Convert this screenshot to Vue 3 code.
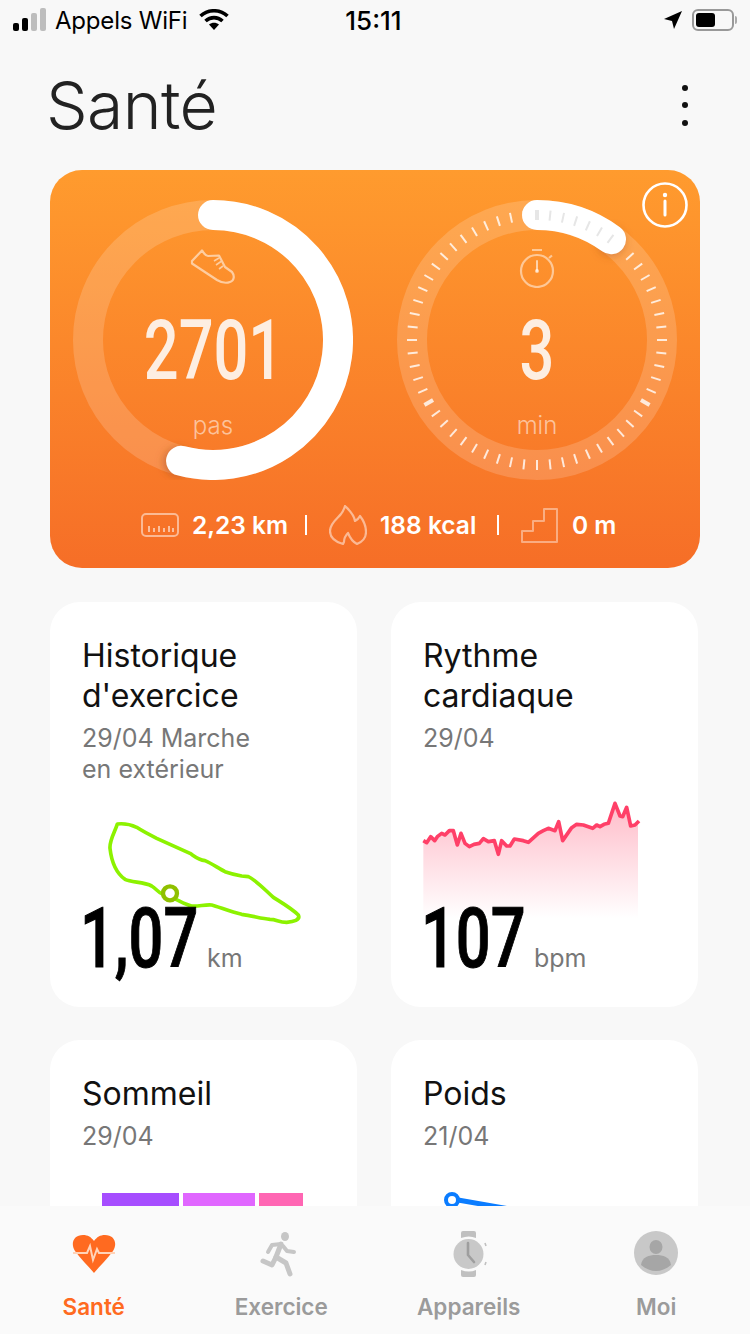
<template>
    <div class="phone">
        <div class="status-bar">
            <div class="status-left">
                <svg class="signal" width="34" height="24" viewBox="0 0 34 24">
                    <rect x="0" y="15" width="6" height="8" rx="2" fill="#000" />
                    <rect x="9" y="10" width="6" height="13" rx="2" fill="#000" />
                    <rect x="18" y="5" width="6" height="18" rx="2" fill="#bdbdbd" />
                    <rect x="27" y="0" width="6" height="23" rx="2" fill="#bdbdbd" />
                </svg>
                <span>Appels WiFi</span>
                <svg width="32" height="22" viewBox="0 0 32 22">
                    <path d="M16 21 L11 15.5 C14 13 18 13 21 15.5 Z" fill="#000" />
                    <path d="M7.5 12 C12.5 7.5 19.5 7.5 24.5 12 M2.5 7 C10 0 22 0 29.5 7" fill="none" stroke="#000" stroke-width="3.6" />
                </svg>
            </div>
            <div class="status-time">15:11</div>
            <div class="status-right">
                <svg width="18" height="18" viewBox="0 0 18 18">
                    <path d="M18 0 L10 18 L8 10 L0 8 Z" fill="#000" />
                </svg>
                <div class="battery"><div class="battery-level"></div></div>
                <div class="battery-nub"></div>
            </div>
        </div>

        <div class="content">
            <div class="page-header">
                <h1 class="page-title">Santé</h1>
                <div class="more-dots"><i></i><i></i><i></i></div>
            </div>

            <div class="activity-card">
                <svg class="info-icon" width="48" height="48" viewBox="0 0 48 48">
                    <circle cx="24" cy="24" r="21.5" fill="none" stroke="#fff" stroke-width="2.6" />
                    <circle cx="24" cy="14" r="2.2" fill="#fff" />
                    <path d="M24 20 V34" stroke="#fff" stroke-width="3" stroke-linecap="round" />
                </svg>

                <div class="rings">
                    <div class="ring">
                        <svg class="ring-svg" width="280" height="280" viewBox="0 0 280 280">
                            <defs>
                                <filter id="capBlur" x="-50%" y="-50%" width="200%" height="200%">
                                    <feGaussianBlur stdDeviation="4" />
                                </filter>
                            </defs>
                            <circle cx="140" cy="140" r="125" fill="none" stroke="#fff" stroke-opacity="0.17" stroke-width="30" />
                            <circle cx="105" cy="262" r="14" fill="#a04a20" fill-opacity="0.55" filter="url(#capBlur)" />
                            <path :d="arcPath(194.8)" fill="none" stroke="#fff" stroke-width="30" stroke-linecap="round" />
                        </svg>
                        <svg class="ring-icon" width="46" height="36" viewBox="0 0 46 36">
                            <path d="M2 12 L12 1.5 C14 4 15 7 18 7 L29 6.5 L35 18 L42 23 C45 27 44 32 40 33 C36 34.5 32 34 27 31 L2 14.5 Z" fill="none" stroke="#fff" stroke-opacity="0.55" stroke-width="2.2" stroke-linejoin="round" />
                            <path d="M24 12 L29 9 M26 16 L31 12.5 M29 20 L33 17" stroke="#fff" stroke-opacity="0.55" stroke-width="1.6" />
                        </svg>
                        <div class="ring-value"><span>2701</span></div>
                        <div class="ring-unit">pas</div>
                    </div>

                    <div class="ring">
                        <svg class="ring-svg" width="280" height="280" viewBox="0 0 280 280">
                            <circle cx="140" cy="140" r="125" fill="none" stroke="#fff" stroke-opacity="0.17" stroke-width="30" />
                            <circle cx="214" cy="42" r="14" fill="#a04a20" fill-opacity="0.4" filter="url(#capBlur)" />
                            <path :d="arcPath(36.3)" fill="none" stroke="#fff" stroke-width="30" stroke-linecap="round" />
                            <line
                                v-for="t in ticks"
                                :key="t.deg"
                                :x1="t.x1" :y1="t.y1" :x2="t.x2" :y2="t.y2"
                                :stroke="t.color"
                                :stroke-width="t.width"
                            />
                        </svg>
                        <svg class="ring-icon ring-icon-timer" width="36" height="40" viewBox="0 0 36 40">
                            <circle cx="18" cy="23" r="16" fill="none" stroke="#fff" stroke-opacity="0.5" stroke-width="2.2" />
                            <path d="M13 2 H23 M30 10 L33 7.5" stroke="#fff" stroke-opacity="0.5" stroke-width="2.2" />
                            <path d="M18 13 V23" stroke="#fff" stroke-opacity="0.6" stroke-width="2" stroke-linecap="round" />
                            <circle cx="18" cy="23" r="2" fill="#fff" fill-opacity="0.6" />
                        </svg>
                        <div class="ring-value"><span>3</span></div>
                        <div class="ring-unit">min</div>
                    </div>
                </div>

                <div class="stats">
                    <svg width="38" height="24" viewBox="0 0 38 24">
                        <rect x="1" y="1" width="36" height="22" rx="4" fill="none" stroke="#fff" stroke-opacity="0.5" stroke-width="2" />
                        <path d="M8 19 V13 M13 19 V15 M18 19 V13 M23 19 V15 M28 19 V13 M32 19 V15" stroke="#fff" stroke-opacity="0.55" stroke-width="2" />
                    </svg>
                    <span class="stat-text stat-km">2,23 km</span>
                    <i class="stat-sep"></i>
                    <svg width="38" height="41" viewBox="0 0 38 41">
                        <path d="M16 1 C19 4 25 9 26 16 C28 15 30 13 31 11 C35 16 37 21 37 27 C37 33 33 37 28 39 C24 37 21 33 19 28 C17 30 15 33 15 37 L14 39 C7 37 1 33 1 26 C1 18 9 13 12 9 C14 7 15 4 16 1 Z" fill="none" stroke="#fff" stroke-opacity="0.5" stroke-width="2.200" stroke-linejoin="round" />
                    </svg>
                    <span class="stat-text stat-kcal">188 kcal</span>
                    <i class="stat-sep"></i>
                    <svg width="37" height="35" viewBox="0 0 37 35">
                        <path d="M1 34 V23 H12 V13 H23 V1 H36 V34 Z" fill="none" stroke="#fff" stroke-opacity="0.42" stroke-width="2" stroke-linejoin="round" />
                    </svg>
                    <span class="stat-text stat-m">0 m</span>
                </div>
            </div>

            <div class="tiles">
                <div class="tile">
                    <div class="tile-title">Historique<br>d'exercice</div>
                    <div class="tile-sub">29/04 Marche<br>en extérieur</div>
                    <svg class="route" width="300" height="190" viewBox="0 0 900 570">
                        <path d="M330 282 C300 290 295 270 275 258 C250 245 215 248 195 238 C170 220 155 190 150 145 C148 120 165 95 172 72 C190 70 215 75 230 82 C250 95 270 105 290 115 L390 160 C405 170 415 180 435 182 C455 190 475 205 495 215 C515 222 530 225 545 228 L565 230 C585 238 610 265 640 292 C665 308 695 325 715 345 C722 360 700 365 680 367 C655 367 650 358 630 358 C605 356 580 348 545 343 C510 335 475 320 455 315 C435 313 415 320 395 318 C375 315 355 300 330 290" fill="none" stroke="#8cf200" stroke-width="11" stroke-linejoin="round" />
                        <circle cx="330" cy="280" r="21" fill="#fff" stroke="#8fc000" stroke-width="13" />
                    </svg>
                    <div class="tile-metric">
                        <span class="metric-value metric-km"><span>1,07</span></span>
                        <span class="metric-unit">km</span>
                    </div>
                </div>

                <div class="tile">
                    <div class="tile-title">Rythme<br>cardiaque</div>
                    <div class="tile-sub">29/04</div>
                    <svg class="pulse" width="260" height="190" viewBox="0 0 780 570">
                        <defs>
                            <linearGradient id="pulseFill" x1="0" y1="0" x2="0" y2="1">
                                <stop offset="0" stop-color="#ffbcc9" />
                                <stop offset="1" stop-color="#ffffff" />
                            </linearGradient>
                        </defs>
                        <path :d="pulseArea" fill="url(#pulseFill)" />
                        <polyline :points="pulsePoints" fill="none" stroke="#ff4068" stroke-width="11" stroke-linejoin="round" />
                    </svg>
                    <div class="tile-metric">
                        <span class="metric-value metric-bpm"><span>107</span></span>
                        <span class="metric-unit">bpm</span>
                    </div>
                </div>

                <div class="tile">
                    <div class="tile-title">Sommeil</div>
                    <div class="tile-sub">29/04</div>
                    <div class="sleep-bars">
                        <i class="sleep-deep"></i>
                        <i class="sleep-light"></i>
                        <i class="sleep-rem"></i>
                    </div>
                </div>

                <div class="tile">
                    <div class="tile-title">Poids</div>
                    <div class="tile-sub">21/04</div>
                    <svg class="weight" width="120" height="30" viewBox="0 0 120 30">
                        <path d="M27 9 L90 20" stroke="#0a7cff" stroke-width="5" fill="none" />
                        <circle cx="21" cy="9" r="6" fill="#fff" stroke="#0a7cff" stroke-width="4" />
                    </svg>
                </div>
            </div>
        </div>

        <div class="tab-bar">
            <div class="tab tab-active">
                <svg width="46" height="44" viewBox="0 0 46 44">
                    <path d="M23 41 C18 35 10 27 4 19 C-1 11 3 3 12 3 C17 3 20 5 23 9 C26 5 29 3 34 3 C43 3 47 11 42 19 C36 27 28 35 23 41 Z" fill="#ff6a20" />
                    <path d="M2 21 H16 L19 14 L22 28 L26 17 L28 21 H44" fill="none" stroke="#ffd3b8" stroke-width="2" />
                </svg>
                <span>Santé</span>
            </div>
            <div class="tab">
                <svg width="46" height="44" viewBox="0 0 46 44">
                    <ellipse cx="27" cy="4.500" rx="4" ry="4.600" fill="#c6c6c6" />
                    <path d="M23 12 L18 25 L28 31 L32 42" fill="none" stroke="#c6c6c6" stroke-width="5" stroke-linejoin="round" stroke-linecap="round" />
                    <path d="M18 25 L14 33 L5 29" fill="none" stroke="#c6c6c6" stroke-width="5" stroke-linejoin="round" stroke-linecap="round" />
                    <path d="M23 12 L14 13 L10 20 M25 14 L29 19 L36 20" fill="none" stroke="#c6c6c6" stroke-width="4" stroke-linejoin="round" stroke-linecap="round" />
                </svg>
                <span>Exercice</span>
            </div>
            <div class="tab">
                <svg width="46" height="46" viewBox="0 0 46 46">
                    <path d="M15 7 V2 Q15 0 17 0 H28 Q30 0 30 2 V7 Q23 4 15 7 Z M15 39 V44 Q15 46 17 46 H28 Q30 46 30 44 V39 Q23 42 15 39 Z" fill="#c0c0c0" />
                    <circle cx="22.500" cy="23" r="15" fill="#c8c8c8" />
                    <path d="M22 12 V24 L28 31" fill="none" stroke="#9e9e9e" stroke-width="2.600" stroke-linecap="round" stroke-linejoin="round" />
                    <path d="M39 12 L40 15 M39 34 L40 31" stroke="#c0c0c0" stroke-width="1.600" />
                </svg>
                <span>Appareils</span>
            </div>
            <div class="tab">
                <svg width="46" height="46" viewBox="0 0 46 46">
                    <circle cx="23" cy="22" r="22" fill="#c8c8c8" />
                    <ellipse cx="23" cy="16" rx="6.500" ry="7" fill="#a6a6a6" />
                    <path d="M8 34 C9 26 16 24 23 24 C30 24 37 26 38 34 C33 38 28 40 23 40 C18 40 13 38 8 34 Z" fill="#a6a6a6" />
                </svg>
                <span>Moi</span>
            </div>
        </div>
    </div>
</template>

<script setup>
const arcPoint = (r, deg) => {
    const rad = (deg * Math.PI) / 180;
    return {
        x: +(140 + r * Math.sin(rad)).toFixed(2),
        y: +(140 - r * Math.cos(rad)).toFixed(2)
    };
};

const arcPath = (deg) => {
    const end = arcPoint(125, deg);
    return `M140 15 A125 125 0 ${deg > 180 ? 1 : 0} 1 ${end.x} ${end.y}`;
};

// 60 ticks, the thick ones sit at 0, 120 and 240 degrees
const ticks = Array.from({ length: 60 }, (_, i) => {
    const deg = i * 6;
    const a = arcPoint(120, deg);
    const b = arcPoint(130, deg);
    return {
        deg,
        x1: a.x,
        y1: a.y,
        x2: b.x,
        y2: b.y,
        width: deg % 120 === 0 ? 4 : 2,
        color: deg <= 36 ? '#e6e6e6' : 'rgba(255,255,255,0.8)'
    };
});

const pulse = [
    [70, 152], [80, 158], [92, 140], [104, 152], [112, 140], [125, 130], [135, 135], [148, 122],
    [160, 122], [172, 165], [183, 130], [195, 160], [208, 170], [222, 163], [238, 160], [250, 146],
    [265, 155], [283, 152], [295, 193], [305, 152], [320, 168], [330, 168], [343, 147], [370, 152],
    [385, 157], [415, 130], [430, 122], [445, 115], [465, 122], [476, 95], [488, 152], [515, 113],
    [530, 103], [550, 105], [578, 115], [590, 105], [600, 110], [612, 103], [625, 100], [645, 40],
    [660, 78], [668, 80], [680, 52], [692, 108], [705, 105], [717, 93]
];
const pulsePoints = pulse.map((p) => p.join(',')).join(' ');
const pulseArea = `M70 385 L${pulse.map((p) => p.join(' ')).join(' L')} L714 93 L714 385 Z`;
</script>

<style scoped>
.phone {
    width: 750px;
    height: 1334px;
    display: flex;
    flex-direction: column;
    overflow: hidden;
    background: #f8f8f8;
    color: #000;
    font-family: Inter, "Noto Sans", sans-serif;
}

.status-bar {
    height: 40px;
    flex: none;
    display: grid;
    grid-template-columns: 1fr auto 1fr;
    align-items: center;
    padding: 0 13px;
    font-size: 24px;
}

.status-left {
    display: flex;
    align-items: center;
    gap: 8px;
    letter-spacing: -0.2px;
}

.status-left svg:last-child {
    margin-left: 3px;
}

.status-time {
    font-weight: 500;
    font-size: 26px;
    margin-right: 3px;
}

.status-right {
    display: flex;
    align-items: center;
    justify-content: flex-end;
}

.battery {
    width: 42px;
    height: 22px;
    margin-left: 10px;
    padding: 2px;
    box-sizing: border-box;
    border: 2px solid #999;
    border-radius: 6px;
}

.battery-level {
    width: 19px;
    height: 14px;
    background: #000;
    border-radius: 3px;
}

.battery-nub {
    width: 2px;
    height: 8px;
    margin-left: 1px;
    background: #aaa;
    border-radius: 0 2px 2px 0;
}

.content {
    flex: 1;
    min-height: 0;
    overflow: hidden;
}

.page-header {
    height: 130px;
    display: flex;
    justify-content: space-between;
    align-items: center;
    padding: 0 62px 0 46px;
}

.page-title {
    margin: 0;
    font-size: 66px;
    font-weight: 300;
    letter-spacing: -0.6px;
    color: #222;
}

.more-dots {
    display: flex;
    flex-direction: column;
    gap: 11.500px;
}

.more-dots i {
    width: 6px;
    height: 6px;
    border-radius: 50%;
    background: #111;
}

.activity-card {
    position: relative;
    width: 650px;
    height: 398px;
    margin-left: 50px;
    box-sizing: border-box;
    padding-top: 30px;
    border-radius: 32px;
    background: linear-gradient(180deg, #ff9b2e 0%, #f66e27 100%);
}

.info-icon {
    position: absolute;
    top: 11px;
    right: 11px;
    z-index: 1;
}

.rings {
    display: flex;
    gap: 44px;
    padding-left: 23px;
}

.ring {
    position: relative;
    width: 280px;
    height: 280px;
    display: flex;
    flex-direction: column;
    align-items: center;
}

.ring-svg {
    position: absolute;
    inset: 0;
}

.ring-icon {
    position: relative;
    height: 40px;
    margin-top: 47px;
}

.ring-icon-timer {
    margin-top: 48px;
    margin-bottom: -1px;
}

.ring-value {
    position: relative;
    height: 76px;
    margin-top: 26px;
    font-family: Roboto, sans-serif;
    font-size: 84px;
    font-weight: 500;
    line-height: 76px;
    color: #fdeee2;
}

.ring-value span {
    display: inline-block;
    transform: scaleX(0.73);
}

.ring-unit {
    position: relative;
    margin-top: 21px;
    font-size: 24px;
    font-weight: 300;
    line-height: 32px;
    color: rgba(255, 255, 255, 0.55);
}

.stats {
    height: 44px;
    margin-top: 23px;
    display: flex;
    align-items: center;
    padding-left: 91px;
}

.stat-text {
    font-size: 24.500px;
    font-weight: 600;
    color: #fff;
    white-space: nowrap;
}

.stat-km {
    width: 96px;
    margin: 0 17px 0 13px;
}

.stat-kcal {
    width: 100px;
    margin: 0 17px 0 13px;
}

.stat-m {
    margin-left: 14px;
}

.stat-sep {
    width: 2px;
    height: 20px;
    margin-right: 22px;
    background: #fff;
}

.tiles {
    display: grid;
    grid-template-columns: 307px 307px;
    grid-auto-rows: 405px;
    column-gap: 34px;
    row-gap: 33px;
    margin: 34px 0 0 50px;
}

.tile {
    position: relative;
    display: flex;
    flex-direction: column;
    padding: 34px 32px 30px;
    box-sizing: border-box;
    border-radius: 30px;
    background: #fff;
}

.tile-title {
    font-size: 32px;
    line-height: 40px;
    color: #111;
}

.tile-sub {
    margin-top: 7px;
    font-size: 25px;
    line-height: 31px;
    color: #777;
}

.route {
    position: absolute;
    left: 10px;
    top: 198px;
}

.pulse {
    position: absolute;
    left: 9px;
    top: 188px;
}

.tile-metric {
    position: relative;
    margin-top: auto;
    display: flex;
    align-items: baseline;
    gap: 10px;
}

.metric-value {
    height: 76px;
    line-height: 76px;
    font-family: Roboto, sans-serif;
    font-size: 84px;
    font-weight: 500;
    color: #000;
    white-space: nowrap;
}

.metric-km {
    width: 115px;
}

.metric-bpm {
    width: 101px;
}

.metric-value span {
    display: inline-block;
    margin-left: -2px;
    -webkit-text-stroke: 1px #000;
    transform: scaleX(0.73);
    transform-origin: left center;
}

.metric-unit {
    font-size: 25px;
    color: #777;
}

.sleep-bars {
    position: absolute;
    left: 52px;
    top: 153px;
    display: flex;
    gap: 4px;
}

.sleep-bars i {
    height: 60px;
}

.sleep-deep {
    width: 77px;
    background: #a64dff;
}

.sleep-light {
    width: 72px;
    background: #e066ff;
}

.sleep-rem {
    width: 44px;
    background: #ff66b3;
}

.weight {
    position: absolute;
    left: 40px;
    top: 151px;
}

.tab-bar {
    height: 128px;
    flex: none;
    position: relative;
    display: grid;
    grid-template-columns: repeat(4, 187.5px);
    background: #fafafa;
}

.tab {
    display: flex;
    flex-direction: column;
    align-items: center;
    padding-top: 25px;
    font-size: 22.500px;
    font-weight: 600;
    color: #9b9b9b;
}

.tab svg {
    height: 46px;
}

.tab span {
    margin-top: 16px;
}

.tab-active {
    color: #ff6a20;
}
</style>
